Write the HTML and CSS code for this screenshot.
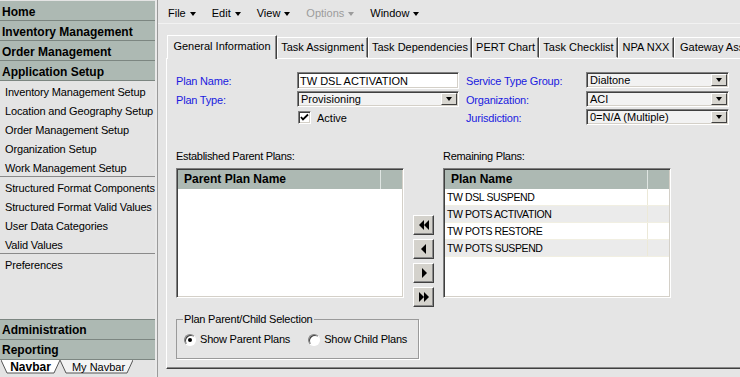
FILE: index.html
```html
<!DOCTYPE html>
<html lang="en">
<head>
  <meta charset="UTF-8">
  <meta name="viewport" content="width=device-width, initial-scale=1.0">
  <title>Plan Setup</title>
  <link rel="stylesheet" href="styles.css">
</head>
<body>
  <div class="app">
    <aside class="nav">
      <div class="nav-head">Home</div>
      <div class="nav-head">Inventory Management</div>
      <div class="nav-head">Order Management</div>
      <div class="nav-head">Application Setup</div>
      <div class="nav-group">
        <div class="nav-item">Inventory Management Setup</div>
        <div class="nav-item">Location and Geography Setup</div>
        <div class="nav-item">Order Management Setup</div>
        <div class="nav-item">Organization Setup</div>
        <div class="nav-item">Work Management Setup</div>
      </div>
      <div class="nav-group">
        <div class="nav-item">Structured Format Components</div>
        <div class="nav-item">Structured Format Valid Values</div>
        <div class="nav-item">User Data Categories</div>
        <div class="nav-item">Valid Values</div>
      </div>
      <div class="nav-item">Preferences</div>
      <div class="nav-spacer"></div>
      <div class="nav-head lower first">Administration</div>
      <div class="nav-head lower">Reporting</div>
      <div class="nav-tabs">
        <div class="ntab on">
          <svg class="ntab-bg" viewBox="0 0 59 14" preserveAspectRatio="none"><polygon points="0,0 59,0 53,13 6,13" fill="#fff"/><polyline points="0,0 6,13 53,13 59,0" fill="none" stroke="#555"/></svg>
          <span>Navbar</span>
        </div>
        <div class="ntab">
          <svg class="ntab-bg" viewBox="0 0 73 14" preserveAspectRatio="none"><polygon points="0,0 73,0 67,13 6,13" fill="#f3f3f3"/><polyline points="0,0 6,13 67,13 73,0" fill="none" stroke="#555"/></svg>
          <span>My Navbar</span>
        </div>
      </div>
    </aside>
    <div class="split"></div>
    <main class="main">
      <div class="menubar">
        <span class="menu">File<i class="caret"></i></span>
        <span class="menu">Edit<i class="caret"></i></span>
        <span class="menu">View<i class="caret"></i></span>
        <span class="menu off">Options<i class="caret"></i></span>
        <span class="menu">Window<i class="caret"></i></span>
      </div>
      <div class="tabs">
        <div class="tab on">General Information</div>
        <div class="tab">Task Assignment</div>
        <div class="tab">Task Dependencies</div>
        <div class="tab">PERT Chart</div>
        <div class="tab">Task Checklist</div>
        <div class="tab">NPA NXX</div>
        <div class="tab">Gateway Ass</div>
      </div>
      <div class="panel">
        <div class="form">
          <label class="lbl">Plan Name:</label>
          <div class="field text">TW DSL ACTIVATION</div>
          <span></span>
          <label class="lbl">Service Type Group:</label>
          <div class="field combo"><span>Dialtone</span><i class="drop"></i></div>

          <label class="lbl">Plan Type:</label>
          <div class="field combo"><span>Provisioning</span><i class="drop"></i></div>
          <span></span>
          <label class="lbl">Organization:</label>
          <div class="field combo"><span>ACI</span><i class="drop"></i></div>

          <span></span>
          <div class="check">
            <span class="box"><svg width="9" height="9" viewBox="0 0 9 9"><polyline points="1,4 3,6.5 8,1.5" fill="none" stroke="#000" stroke-width="1.8"/></svg></span>
            Active
          </div>
          <span></span>
          <label class="lbl">Jurisdiction:</label>
          <div class="field combo"><span>0=N/A (Multiple)</span><i class="drop"></i></div>
        </div>

        <div class="lists">
          <div class="col">
            <div class="cap">Established Parent Plans:</div>
            <div class="listbox">
              <div class="lrow head"><span class="cell">Parent Plan Name</span><span class="pad"></span></div>
            </div>
          </div>
          <div class="movers">
            <div class="abtn"><svg width="12" height="10" viewBox="0 0 12 10"><polygon points="6,0 6,10 1,5" fill="#000"/><polygon points="11,0 11,10 6,5" fill="#000"/></svg></div>
            <div class="abtn"><svg width="12" height="10" viewBox="0 0 12 10"><polygon points="8,0 8,10 3,5" fill="#000"/></svg></div>
            <div class="abtn"><svg width="12" height="10" viewBox="0 0 12 10"><polygon points="4,0 4,10 9,5" fill="#000"/></svg></div>
            <div class="abtn"><svg width="12" height="10" viewBox="0 0 12 10"><polygon points="1,0 1,10 6,5" fill="#000"/><polygon points="6,0 6,10 11,5" fill="#000"/></svg></div>
          </div>
          <div class="col">
            <div class="cap">Remaining Plans:</div>
            <div class="listbox">
              <div class="lrow head"><span class="cell">Plan Name</span><span class="pad"></span></div>
              <div class="lrow"><span class="cell">TW DSL SUSPEND</span><span class="pad"></span></div>
              <div class="lrow alt"><span class="cell">TW POTS ACTIVATION</span><span class="pad"></span></div>
              <div class="lrow"><span class="cell">TW POTS RESTORE</span><span class="pad"></span></div>
              <div class="lrow alt"><span class="cell">TW POTS SUSPEND</span><span class="pad"></span></div>
            </div>
          </div>
        </div>

        <fieldset class="group">
          <legend>Plan Parent/Child Selection</legend>
          <div class="radios">
            <span class="radio on"><i></i>Show Parent Plans</span>
            <span class="radio"><i></i>Show Child Plans</span>
          </div>
        </fieldset>
      </div>
    </main>
  </div>
</body>
</html>
```

FILE: styles.css
```css
/* Plan setup screen */
* {
  box-sizing: border-box;
}
body {
  margin: 0;
  font-family: "Liberation Sans", Arial, sans-serif;
  font-size: 11px;
  color: #000;
  background: #e5e5e5;
  overflow: hidden;
}
.app {
  display: flex;
  width: 740px;
  height: 377px;
}

/* left navbar */
.nav {
  width: 155px;
  flex: none;
  display: flex;
  flex-direction: column;
  background: #e4e4e4;
  padding-top: 1px;
  overflow: hidden;
}
.nav-head {
  height: 20px;
  line-height: 16px;
  padding: 3px 0 0 2px;
  background: #adb9b3;
  border-bottom: 1px solid #7c8681;
  font-weight: bold;
  font-size: 12px;
  white-space: nowrap;
}
.nav-head.lower {
  padding-top: 2px;
}
.nav-head.first {
  border-top: 1px solid #7c8681;
  height: 21px;
}
.nav-group {
  border-bottom: 1px solid #8a8a8a;
}
.nav-item {
  height: 19px;
  line-height: 16px;
  padding: 3px 0 0 5px;
  letter-spacing: -0.15px;
  white-space: nowrap;
}
.nav-spacer {
  flex: 1;
}
.nav-tabs {
  height: 17px;
  flex: none;
  display: flex;
  padding-left: 1px;
}
.ntab {
  position: relative;
  width: 59px;
  height: 14px;
  display: flex;
  align-items: center;
  justify-content: center;
  line-height: 13px;
  padding-top: 1px;
}
.ntab + .ntab {
  width: 73px;
  padding-left: 4px;
}
.ntab.on {
  font-weight: bold;
  font-size: 12px;
}
.ntab-bg {
  position: absolute;
  left: 0;
  top: 0;
  width: 100%;
  height: 100%;
}
.ntab span {
  position: relative;
}
.split {
  width: 3px;
  flex: none;
  background: #e9e9e9;
  border-right: 1px solid #9a9a9a;
}

/* main area */
.main {
  flex: 1;
  min-width: 0;
  overflow: hidden;
  display: flex;
  flex-direction: column;
}
.menubar {
  height: 24px;
  flex: none;
  display: flex;
  align-items: center;
  padding: 3px 0 0 10px;
  gap: 16px;
  border-bottom: 1px solid #f2f2f2;
}
.menu {
  display: flex;
  align-items: center;
  white-space: nowrap;
}
.caret {
  width: 0;
  height: 0;
  margin-left: 4px;
  margin-top: 2px;
  border-left: 3.5px solid transparent;
  border-right: 3.5px solid transparent;
  border-top: 4px solid #000;
}
.menu.off {
  color: #9c9c9c;
}
.menu.off .caret {
  border-top-color: #9c9c9c;
}

.tabs {
  flex: none;
  display: flex;
  align-items: flex-end;
  height: 23px;
  margin: 11px 0 0 9px;
  position: relative;
  z-index: 1;
}
.tab {
  flex: none;
  height: 21px;
  line-height: 19px;
  text-align: center;
  white-space: nowrap;
  border: 1px solid;
  border-color: #fff #404040 transparent #fff;
  box-shadow: inset -1px 0 #8a8a8a;
}
.tab.on {
  height: 24px;
  margin-bottom: -1px;
  line-height: 21px;
  background: #e5e5e5;
  border-bottom: none;
}
.tab:nth-child(1) { width: 110px; }
.tab:nth-child(2) { width: 91px; }
.tab:nth-child(3) { width: 104px; }
.tab:nth-child(4) { width: 67px; }
.tab:nth-child(5) { width: 79px; }
.tab:nth-child(6) { width: 56px; }
.tab:nth-child(7) { width: 80px; text-align: left; padding-left: 5px; }

.panel {
  flex: none;
  width: 600px;
  height: 311px;
  margin-left: 8px;
  border-top: 1px solid #fff;
  border-left: 1px solid #fff;
  border-bottom: 1px solid #404040;
  box-shadow: inset 0 -1px #8a8a8a;
  padding: 13px 0 0 9px;
}

/* header form */
.form {
  display: grid;
  grid-template-columns: 121px 162px 7px 120px 143px;
  grid-template-rows: 19px 18px 18px;
}
.lbl {
  color: #1a1ae0;
  line-height: 17px;
  padding-top: 1px;
  letter-spacing: -0.2px;
  white-space: nowrap;
}
.field {
  height: 17px;
  background: #fff;
  border: 1px solid;
  border-color: #808080 #fff #fff #808080;
  box-shadow: inset 1px 1px #404040, inset -1px -1px #d4d0c8;
  display: flex;
  align-items: center;
  white-space: nowrap;
}
.field.text {
  padding-left: 2px;
}
.field.combo {
  height: 16px;
  background: #f2f2f2;
  padding-left: 3px;
}
.field.combo span {
  flex: 1;
}
.drop {
  width: 16px;
  height: 12px;
  margin-right: 1px;
  background: #d8d6d0;
  border: 1px solid;
  border-color: #fff #404040 #404040 #fff;
  display: flex;
  align-items: center;
  justify-content: center;
}
.drop::after {
  content: "";
  border-left: 3.5px solid transparent;
  border-right: 3.5px solid transparent;
  border-top: 4px solid #000;
}
.check {
  display: flex;
  align-items: center;
  gap: 6px;
  height: 17px;
  margin-left: 1px;
}
.box {
  width: 13px;
  height: 13px;
  background: #fff;
  border: 1px solid;
  border-color: #808080 #fff #fff #808080;
  box-shadow: inset 1px 1px #404040, inset -1px -1px #d4d0c8;
  display: flex;
  align-items: center;
  justify-content: center;
}

/* plan lists */
.lists {
  display: flex;
  align-items: flex-start;
  gap: 9px;
  height: 149px;
  margin-top: 22px;
}
.col {
  width: 228px;
}
.cap {
  line-height: 13px;
  padding-top: 1px;
  height: 14px;
  margin-bottom: 5px;
  letter-spacing: -0.3px;
}
.listbox {
  height: 130px;
  background: #fff;
  border: 1px solid;
  border-color: #808080 #fff #fff #808080;
  box-shadow: inset 1px 1px #404040, inset -1px -1px #d4d0c8;
  padding: 1px 1px 0 1px;
  overflow: hidden;
}
.lrow {
  display: flex;
  height: 17px;
  line-height: 17px;
  border-bottom: 1px solid #f1efe2;
  font-size: 10.5px;
  letter-spacing: -0.4px;
}
.lrow .cell {
  flex: 1;
  padding-left: 2px;
  border-right: 1px solid #ece9d8;
  white-space: nowrap;
}
.lrow .pad {
  width: 21px;
}
.lrow.alt {
  background: #ebebeb;
}
.lrow.head {
  height: 19px;
  line-height: 19px;
  background: #adb9b3;
  border-bottom: none;
  font-size: 12px;
  font-weight: bold;
  letter-spacing: 0;
}
.lrow.head .cell {
  padding-left: 6px;
  border-right-color: #dfe5e2;
}
.movers {
  width: 21px;
  margin-top: 66px;
  display: flex;
  flex-direction: column;
  gap: 4px;
}
.abtn {
  width: 21px;
  height: 20px;
  background: #d4d2cc;
  border: 1px solid;
  border-color: #fff #404040 #404040 #fff;
  box-shadow: inset -1px -1px #8a8a8a;
  display: flex;
  align-items: center;
  justify-content: center;
}

/* parent/child group */
.group {
  width: 243px;
  height: 46px;
  margin: 15px 0 0 0;
  padding: 0 0 0 6px;
  border: 1px solid #9a9a9a;
  box-shadow: 1px 1px 0 #fff;
  letter-spacing: -0.2px;
}
.group legend {
  padding: 0 1px;
  line-height: 13px;
}
.radios {
  display: flex;
  gap: 18px;
  margin: 7px 0 0 1px;
  line-height: 13px;
}
.radio {
  display: flex;
  align-items: center;
  gap: 4px;
  white-space: nowrap;
}
.radio i {
  width: 12px;
  height: 12px;
  border-radius: 50%;
  background: #fff;
  border: 1px solid;
  border-color: #808080 #fff #fff #808080;
  box-shadow: inset 1px 1px #404040;
  display: flex;
  align-items: center;
  justify-content: center;
}
.radio.on i::after {
  content: "";
  width: 4px;
  height: 4px;
  border-radius: 50%;
  background: #000;
}
```
